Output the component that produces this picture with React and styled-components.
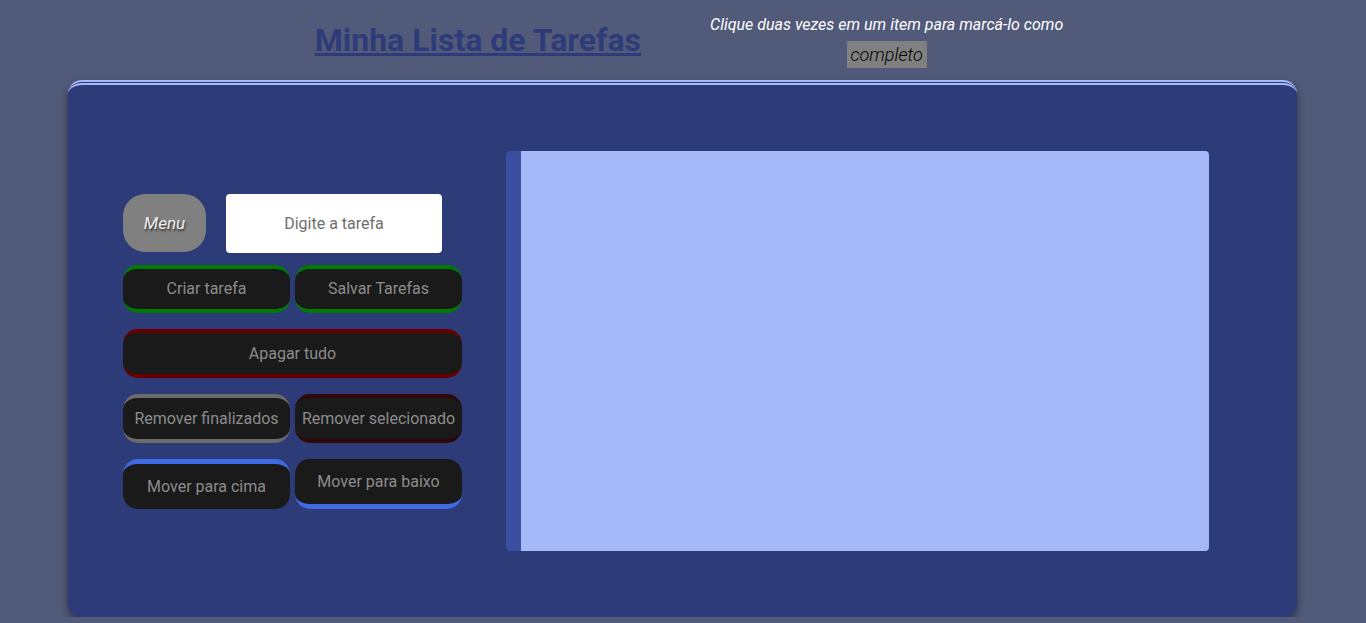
import React from "react";
import styled, { createGlobalStyle } from "styled-components";

const GlobalStyle = createGlobalStyle`
  body {
    margin: 0;
    background-color: #525a7a;
    font-family: Roboto, "Liberation Sans", sans-serif;
  }
`;

const Header = styled.header`
  display: flex;
  justify-content: center;
  align-items: flex-start;
  gap: 69px;
  height: 80px;
  padding-left: 12px;
  box-sizing: border-box;
`;

const Title = styled.h1`
  margin: 20px 0 0;
  font-size: 32px;
  font-weight: 700;
  color: #2d3c79;
  text-decoration: underline;
  line-height: 40px;
`;

const Hint = styled.div`
  display: flex;
  flex-direction: column;
  align-items: center;
  padding-top: 15px;
  font-style: italic;
  color: #fff;
  font-size: 16px;
  line-height: 20px;
`;

const Highlight = styled.span`
  margin-top: 6px;
  padding: 2px 4px;
  background-color: #808080;
  color: #000;
  font-size: 18px;
  font-weight: 300;
  line-height: 23px;
`;

const Panel = styled.main`
  display: flex;
  align-items: center;
  gap: 44px;
  margin: 0 69px 0 68px;
  padding: 66px 88px 66px 55px;
  background-color: #2d3c79;
  border-top: 5px double #a5b8f8;
  border-radius: 14px;
  box-shadow: 0 4px 8px rgba(0, 0, 0, 0.45);
`;

const Controls = styled.div`
  display: flex;
  flex-direction: column;
  width: 339px;
  flex-shrink: 0;
`;

const TopRow = styled.div`
  display: flex;
  align-items: center;
  gap: 20px;
  margin-bottom: 12px;
`;

const MenuButton = styled.button`
  width: 83px;
  height: 58px;
  border: none;
  border-radius: 22px;
  background-color: #808080;
  color: #eee;
  font-family: inherit;
  font-style: italic;
  font-size: 17px;
  text-shadow: 1px 2px 2px #333;
`;

const TaskInput = styled.input`
  width: 216px;
  height: 59px;
  box-sizing: border-box;
  border: none;
  border-radius: 4px;
  background-color: #fff;
  text-align: center;
  font-family: inherit;
  font-size: 16px;
  &::placeholder {
    color: #6e6e6e;
  }
`;

const Row = styled.div`
  display: flex;
  gap: 5px;
  margin-bottom: ${(p) => p.$gap ?? 16}px;
`;

const ActionButton = styled.button`
  flex: 1;
  height: ${(p) => p.$height ?? 48}px;
  box-sizing: border-box;
  padding: 0;
  background-color: #1a1a1a;
  color: #8c8c8c;
  font-family: inherit;
  font-size: 16px;
  border: none;
  border-top: ${(p) => (p.$top ? `${p.$width ?? 4}px solid ${p.$top}` : "none")};
  border-bottom: ${(p) => (p.$bottom ? `${p.$width ?? 4}px solid ${p.$bottom}` : "none")};
  border-radius: 15px;
  white-space: nowrap;
`;

const TaskList = styled.ul`
  flex: 1;
  height: 400px;
  margin: 0;
  padding: 0;
  list-style: none;
  background-color: #a5b8f8;
  border-left: 15px solid #3a4fa0;
  border-radius: 4px;
`;

export default function App() {
  return (
    <>
      <GlobalStyle />
      <Header>
        <Title>Minha Lista de Tarefas</Title>
        <Hint>
          <span>Clique duas vezes em um item para marcá-lo como</span>
          <Highlight>completo</Highlight>
        </Hint>
      </Header>
      <Panel>
        <Controls>
          <TopRow>
            <MenuButton>Menu</MenuButton>
            <TaskInput placeholder="Digite a tarefa" />
          </TopRow>
          <Row>
            <ActionButton $top="#007a00" $bottom="#007a00">Criar tarefa</ActionButton>
            <ActionButton $top="#007a00" $bottom="#007a00">Salvar Tarefas</ActionButton>
          </Row>
          <Row>
            <ActionButton $top="#660000" $bottom="#660000" $height={49}>Apagar tudo</ActionButton>
          </Row>
          <Row>
            <ActionButton $top="#6b6b6b" $bottom="#6b6b6b" $height={49}>Remover finalizados</ActionButton>
            <ActionButton $top="#2e0808" $bottom="#2e0808" $height={49}>Remover selecionado</ActionButton>
          </Row>
          <Row $gap={0}>
            <ActionButton $top="#4169e1" $width={5} $height={50}>Mover para cima</ActionButton>
            <ActionButton $bottom="#4169e1" $width={5} $height={50}>Mover para baixo</ActionButton>
          </Row>
        </Controls>
        <TaskList />
      </Panel>
    </>
  );
}
